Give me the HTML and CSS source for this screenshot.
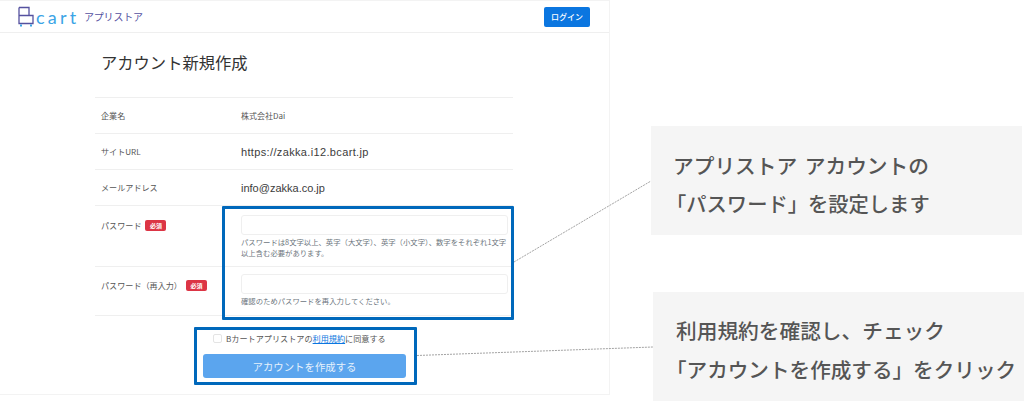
FILE: index.html
```html
<!DOCTYPE html>
<html lang="ja">
<head>
<meta charset="utf-8">
<title>アカウント新規作成</title>
<link rel="stylesheet" href="styles.css">
</head>
<body>
<div class="frame">
  <header class="topbar">
    <div class="brand">
      <svg class="cart-icon" width="18" height="26" viewBox="0 0 18 26" aria-hidden="true">
        <path d="M3 3.500H13V11.500M3 11.500H17V19.500H3V3.500" fill="none" stroke="#55519f" stroke-width="1.300"/>
        <rect x="4" y="20.500" width="2" height="2" fill="#3ba4e6"/>
        <rect x="14" y="20.500" width="2" height="2" fill="#3ba4e6"/>
      </svg>
      <span class="brand-cart">cart</span>
      <span class="brand-store">アプリストア</span>
    </div>
    <button class="login" type="button">ログイン</button>
  </header>
  <main class="content">
    <h1 class="title">アカウント新規作成</h1>
    <div class="row row-short">
      <div class="label">企業名</div>
      <div class="value value-small">株式会社Dai</div>
    </div>
    <div class="row row-short">
      <div class="label">サイトURL</div>
      <div class="value">https://zakka.i12.bcart.jp</div>
    </div>
    <div class="row row-short">
      <div class="label">メールアドレス</div>
      <div class="value value-mail">info@zakka.co.jp</div>
    </div>
    <div class="row row-field row-pass">
      <div class="label">パスワード<span class="req">必須</span></div>
      <div class="field">
        <div class="input"></div>
        <p class="help">パスワードは8文字以上、英字（大文字）、英字（小文字）、数字をそれぞれ1文字以上含む必要があります。</p>
      </div>
    </div>
    <div class="row row-field row-again">
      <div class="label">パスワード（再入力）<span class="req">必須</span></div>
      <div class="field">
        <div class="input"></div>
        <p class="help">確認のためパスワードを再入力してください。</p>
      </div>
    </div>
    <div class="agree">
      <span class="check"></span>
      <span>Bカートアプリストアの<a class="terms" href="#">利用規約</a>に同意する</span>
    </div>
    <button class="submit" type="button">アカウントを作成する</button>
  </main>
</div>

<div class="mark mark-pass"></div>
<div class="mark mark-submit"></div>
<svg class="leaders" width="1024" height="401" viewBox="0 0 1024 401" aria-hidden="true">
  <line x1="514" y1="262" x2="651" y2="181"/>
  <line x1="417" y1="355.500" x2="653" y2="347"/>
</svg>
<aside class="note note-pass">
  <p class="note-first">アプリストア アカウントの</p>
  <p class="note-second">「パスワード」を設定します</p>
</aside>
<aside class="note note-submit">
  <p class="note-first">利用規約を確認し、チェック</p>
  <p class="note-second">「アカウントを作成する」をクリック</p>
</aside>
</body>
</html>
```
FILE: styles.css
```css
* { box-sizing: border-box; }
html, body { margin: 0; padding: 0; }
body {
  width: 1024px;
  height: 401px;
  overflow: hidden;
  position: relative;
  background: #fff;
  color: #444;
  font-family: "Noto Sans CJK JP", "Noto Sans", sans-serif;
}
.frame {
  width: 610px;
  height: 395px;
  border: 1px solid #f3f3f3;
  border-left: 0;
}
.topbar {
  height: 32px;
  border-bottom: 1px solid #efefef;
  display: flex;
  align-items: center;
  justify-content: space-between;
  padding: 0 19px 0 16px;
}
.brand { display: flex; align-items: center; }
.cart-icon { margin-top: 1px; }
.brand-cart {
  font-family: "Lato", sans-serif;
  font-weight: 400;
  font-size: 18px;
  letter-spacing: 3.200px;
  color: #3ba4e6;
  margin-left: 2px;
  width: 44px;
  line-height: 20px;
}
.brand-store {
  font-size: 10px;
  color: #55519f;
  margin-left: 4px;
  letter-spacing: -.2px;
}
.login {
  width: 46px;
  height: 20px;
  border: 0;
  border-radius: 2px;
  background: #0b76e0;
  color: #fff;
  font: 500 8px "Noto Sans CJK JP", sans-serif;
  padding: 0;
}
.content {
  width: 418px;
  margin-left: 95px;
  display: flex;
  flex-direction: column;
}
.title {
  margin: 18px 0 23px 6px;
  height: 23px;
  font-size: 16.300px;
  line-height: 23px;
  font-weight: 400;
  color: #333;
}
.row {
  display: flex;
  border-top: 1px solid #efefef;
  padding-left: 6px;
}
.row-short { height: 36px; align-items: center; }
.row-field { padding-top: 9px; }
.row-pass { height: 61px; }
.row-again { height: 50px; border-bottom: 1px solid #efefef; padding-top: 7px; }
.row-again .label { margin-top: 1px; }
.label {
  width: 140px;
  font-size: 8.100px;
  color: #555;
  display: flex;
  align-items: center;
  height: 20px;
  flex: none;
}
.row-short .label { height: auto; }
.value {
  font: 11px "Liberation Sans", sans-serif;
  letter-spacing: .35px;
  color: #3c3c3c;
}
.value-mail { letter-spacing: 0; }
.value-small {
  font: 8px "Noto Sans CJK JP", sans-serif;
  letter-spacing: 0;
  color: #555;
}
.req {
  margin-left: 4px;
  width: 21px;
  height: 11px;
  border-radius: 2px;
  background: #dc3545;
  color: #fff;
  font-size: 6px;
  font-weight: 700;
  line-height: 11px;
  text-align: center;
}
.field { width: 267px; flex: none; }
.input {
  height: 20px;
  border: 1px solid #efefef;
  border-radius: 3px;
  background: #fff;
}
.help {
  margin: 1px 0 0;
  font-size: 7.350px;
  line-height: 11px;
  color: #6c757d;
}
.agree {
  margin: 12px 0 0 118px;
  height: 20px;
  display: flex;
  align-items: center;
  font-size: 8.150px;
  color: #555;
}
.check {
  width: 9px;
  height: 9px;
  border: 1px solid #e4e4e4;
  border-radius: 2px;
  margin-right: 4px;
}
.terms { color: #0b76e0; text-decoration: underline; }
.submit {
  margin: 6px 0 0 108px;
  width: 203px;
  height: 24px;
  border: 0;
  border-radius: 3px;
  background: #5ba5ee;
  color: #e6f1fc;
  font: 400 10.400px "Noto Sans CJK JP", sans-serif;
  padding: 0;
}
.mark {
  position: absolute;
  border: 3.500px solid #0068bb;
  border-radius: 1px;
}
.mark-pass { left: 222px; top: 206px; width: 292px; height: 114px; }
.mark-submit { left: 194px; top: 327px; width: 223px; height: 58px; }
.leaders { position: absolute; left: 0; top: 0; pointer-events: none; }
.leaders line { stroke: #a3a3a3; stroke-width: 1; stroke-dasharray: 2 1; }
.note {
  position: absolute;
  width: 371px;
  height: 109px;
  background: #f5f5f5;
  color: #555;
  font-size: 20.700px;
  font-weight: 500;
  white-space: nowrap;
}
.note p { margin: 0; position: absolute; line-height: 28px; }
.note-pass { left: 651px; top: 126px; }
.note-pass .note-first { left: 22px; top: 25px; word-spacing: 3px; }
.note-pass .note-second { left: 15px; top: 63px; font-size: 20.300px; }
.note-submit { left: 653px; top: 292px; }
.note-submit .note-first { left: 23px; top: 24px; }
.note-submit .note-second { left: 13px; top: 63px; font-size: 20.600px; }
```
